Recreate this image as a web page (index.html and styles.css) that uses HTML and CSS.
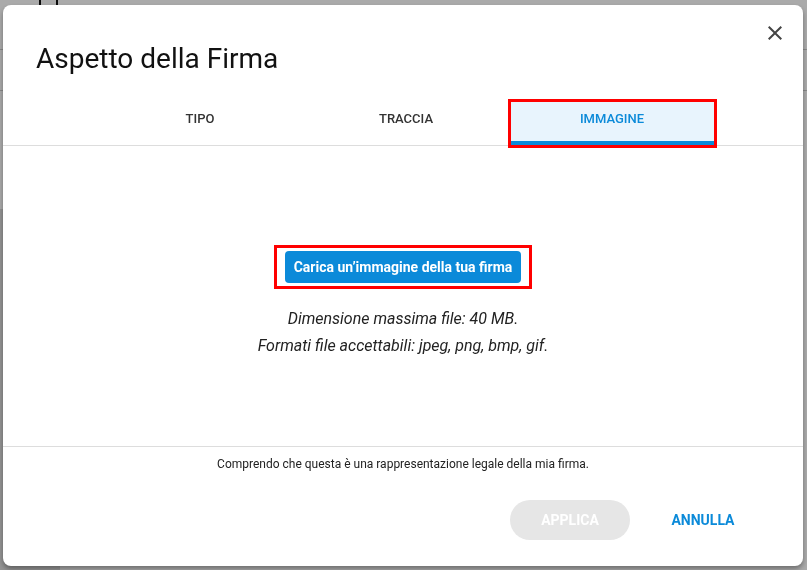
FILE: index.html
```html
<!DOCTYPE html>
<html lang="it">

<head>
    <meta charset="UTF-8">
    <meta name="viewport" content="width=device-width, initial-scale=1.0">
    <title>Aspetto della Firma</title>
    <link rel="stylesheet" href="styles.css">
</head>

<body>
    <div class="page">
        <div class="page-top"><span class="page-icon"></span></div>
        <div class="page-row first"></div>
        <div class="page-row"></div>
        <div class="page-side"></div>
    </div>

    <div class="overlay">
        <div class="dialog">
            <button class="close" aria-label="Chiudi">
                <svg width="24" height="24" viewBox="0 0 24 24">
                    <path d="M19 6.41L17.59 5 12 10.59 6.41 5 5 6.41 10.59 12 5 17.59 6.41 19 12 13.41 17.59 19 19 17.59 13.41 12z" fill="#444" />
                </svg>
            </button>

            <h1 class="title">Aspetto della Firma</h1>

            <div class="tabs">
                <div class="tab">Tipo</div>
                <div class="tab">Traccia</div>
                <div class="tab active">Immagine</div>
            </div>

            <div class="content">
                <div class="upload-wrap">
                    <button class="upload">Carica un’immagine della tua firma</button>
                </div>
                <p class="hint">Dimensione massima file: 40 MB.</p>
                <p class="hint">Formati file accettabili: jpeg, png, bmp, gif.</p>
            </div>

            <div class="footer">
                <p class="legal">Comprendo che questa è una rappresentazione legale della mia firma.</p>
                <div class="actions">
                    <button class="btn apply" disabled>Applica</button>
                    <button class="btn cancel">Annulla</button>
                </div>
            </div>
        </div>
    </div>
</body>

</html>
```

FILE: styles.css
```css
* {
    box-sizing: border-box;
}

body {
    margin: 0;
    font-family: Roboto, 'Liberation Sans', sans-serif;
    color: #222;
    background: #fff;
}

/* the app behind the modal */
.page {
    height: 570px;
    overflow: hidden;
}

.page-top {
    height: 30px;
    padding-left: 39px;
}

.page-icon {
    display: block;
    width: 19px;
    height: 8px;
    border-left: 2px solid #111;
    border-right: 2px solid #111;
}

.page-row {
    height: 41px;
    border-bottom: 1px solid #ccc;
}

.page-row.first {
    height: 20px;
}

.page-side {
    margin-top: 118px;
    width: 60px;
    height: 400px;
    background: #ddd;
}

.overlay {
    position: fixed;
    inset: 0;
    background: rgba(0, 0, 0, 0.335);
    padding: 5px 0 0 3px;
}

.dialog {
    position: relative;
    width: 800px;
    height: 561px;
    background: #fff;
    border-radius: 8px;
    box-shadow: 0 3px 5px rgba(0, 0, 0, 0.35);
    display: flex;
    flex-direction: column;
}

.close {
    position: absolute;
    top: 16px;
    right: 16px;
    width: 24px;
    height: 24px;
    padding: 0;
    border: 0;
    background: none;
    cursor: pointer;
}

.title {
    margin: 37px 0 0 33px;
    font-size: 28px;
    line-height: 34px;
    font-weight: 400;
    color: #111;
}

.tabs {
    display: flex;
    justify-content: center;
    gap: 3px;
    margin-top: 26px;
    padding-left: 6px;
    border-bottom: 1px solid #ddd;
}

.tab {
    width: 203px;
    height: 43px;
    padding-top: 9px;
    text-align: center;
    font-size: 13px;
    line-height: 15px;
    font-weight: 500;
    text-transform: uppercase;
    color: #333;
    border-bottom: 4px solid transparent;
}

.tab.active {
    color: #0b8ad9;
    background: #e8f4fd;
    border-bottom-color: #0b8ad9;
    outline: 3px solid #f00;
    outline-offset: 0;
    box-shadow: 0 3px 0 #f00;
}

.content {
    flex: 1;
    display: flex;
    flex-direction: column;
    align-items: center;
    padding-top: 99px;
}

.upload-wrap {
    border: 3px solid #f00;
    padding: 3px 8px;
}

.upload {
    height: 32px;
    padding: 0 9px;
    border: 0;
    border-radius: 4px;
    background: #0b8ad9;
    color: #fff;
    font-family: inherit;
    font-size: 14px;
    font-weight: 700;
}

.hint {
    margin: 0;
    font-size: 16px;
    line-height: 27px;
    font-style: italic;
    color: #222;
}

.upload-wrap + .hint {
    margin-top: 16px;
}

.footer {
    border-top: 1px solid #ddd;
    padding: 9px 40px 26px 0;
}

.legal {
    margin: 0;
    text-align: center;
    font-size: 12px;
    line-height: 16px;
    color: #222;
    padding-left: 40px;
}

.actions {
    display: flex;
    justify-content: flex-end;
    gap: 13px;
    margin-top: 28px;
}

.btn {
    width: 120px;
    height: 40px;
    border: 0;
    border-radius: 20px;
    background: none;
    font-family: inherit;
    font-size: 14px;
    font-weight: 700;
    text-transform: uppercase;
}

.btn.apply {
    background: #e6e6e6;
    color: #fff;
}

.btn.cancel {
    color: #0b8ad9;
    cursor: pointer;
}
```
